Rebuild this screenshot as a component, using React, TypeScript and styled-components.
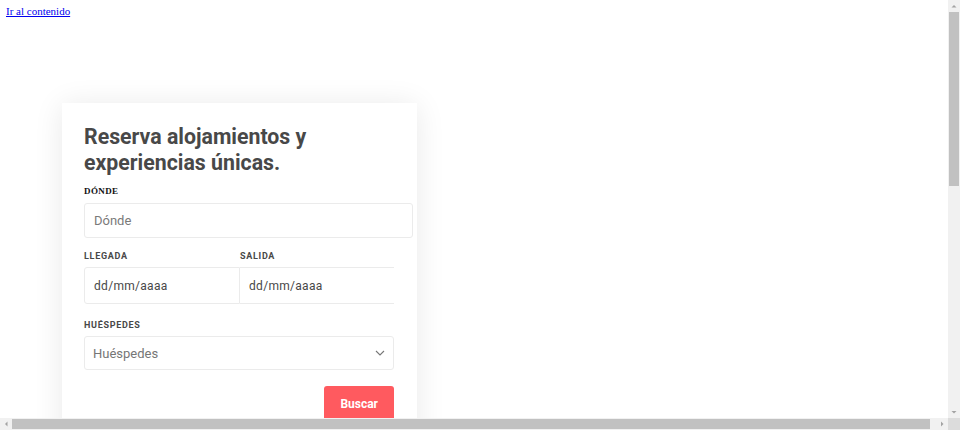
import React from "react";
import styled, { createGlobalStyle } from "styled-components";

const GlobalStyle = createGlobalStyle`
  html, body { margin: 0; padding: 0; background: #ffffff; overflow: hidden; }
  body { font-family: Roboto, "Liberation Sans", sans-serif; }
  * { box-sizing: border-box; }
`;

/* Browser frame: page area plus classic scrollbars */
const Frame = styled.div`
  display: grid;
  grid-template-columns: 948px 12px;
  grid-template-rows: 418px 12px;
  width: 960px;
  height: 430px;
  background: #ffffff;
`;

const Content = styled.div`
  overflow: hidden;
`;

const VBar = styled.div`
  display: flex;
  flex-direction: column;
  background: #f1f1f1;
`;

const HBar = styled.div`
  display: flex;
  flex-direction: row;
  background: #f1f1f1;
`;

const Corner = styled.div`
  background: #dcdcdc;
`;

const ArrowButton = styled.div`
  flex: 0 0 12px;
  width: 12px;
  height: 12px;
  display: flex;
  align-items: center;
  justify-content: center;
`;

const Track = styled.div<{ $vertical?: boolean }>`
  flex: 1;
  display: flex;
  flex-direction: ${(p) => (p.$vertical ? "column" : "row")};
  padding: ${(p) => (p.$vertical ? "0 1px" : "1px 0")};
`;

const Thumb = styled.div<{ $vertical?: boolean; $size: number }>`
  background: #c1c1c1;
  ${(p) => (p.$vertical ? `height: ${p.$size}px;` : `width: ${p.$size}px;`)}
`;

const Arrow = ({ dir }: { dir: "up" | "down" | "left" | "right" }) => {
  const pts: Record<string, string> = {
    up: "0.5,3.5 3,1 5.5,3.5",
    down: "0.5,1 3,3.5 5.5,1",
    left: "3.5,0.5 1,3 3.5,5.5",
    right: "1,0.5 3.5,3 1,5.5",
  };
  const v = dir === "up" || dir === "down";
  return (
    <svg width={v ? 6 : 4} height={v ? 4 : 6} viewBox={v ? "0 0 6 4" : "0 0 4 6"}>
      <polygon points={pts[dir]} fill="#a3a3a3" />
    </svg>
  );
};

const Page = styled.div`
  width: 948px;
  min-height: 930px;
`;

const SkipLink = styled.a`
  display: inline-block;
  margin: 5px 0 0 6px;
  font-family: "Liberation Serif", "Times New Roman", serif;
  font-size: 11px;
  line-height: 13px;
  color: #0000ee;
  text-decoration: underline;
`;

const Hero = styled.section`
  padding: 84px 0 0 62px;
`;

const Card = styled.form`
  width: 355px;
  min-height: 420px;
  padding: 21px 23px 24px 22px;
  background: #ffffff;
  box-shadow: 0 2px 28px rgba(0, 0, 0, 0.09);
  display: flex;
  flex-direction: column;
`;

const Title = styled.h1`
  margin: 0;
  font-family: Roboto, "Liberation Sans", sans-serif;
  font-size: 21.3px;
  line-height: 26px;
  font-weight: 700;
  color: #484848;
`;

const Label = styled.label<{ $serif?: boolean; $top: number; $bottom: number }>`
  display: block;
  margin: ${(p) => p.$top}px 0 ${(p) => p.$bottom}px;
  font-family: ${(p) =>
    p.$serif
      ? `"Liberation Serif", "Times New Roman", serif`
      : `Roboto, "Liberation Sans", sans-serif`};
  font-size: 9px;
  line-height: 10px;
  font-weight: 700;
  letter-spacing: ${(p) => (p.$serif ? "0.4px" : "0.7px")};
  color: ${(p) => (p.$serif ? "#111" : "#484848")};
  text-transform: uppercase;
`;

const WideInput = styled.input`
  display: block;
  width: 329px;
  height: 35px;
  padding: 0 9px;
  border: 1px solid #ebebeb;
  border-radius: 3px;
  font-family: Roboto, "Liberation Sans", sans-serif;
  font-size: 13px;
  color: #484848;
  outline: none;
  &::placeholder { color: #7a7a7a; }
`;

const DateRow = styled.div`
  display: grid;
  grid-template-columns: 156px 154px;
`;

const DateCol = styled.div`
  display: flex;
  flex-direction: column;
`;

const DateInput = styled.input<{ $first?: boolean }>`
  display: block;
  width: 100%;
  height: 37px;
  padding: 0 9px;
  border: 1px solid #ebebeb;
  border-right: ${(p) => (p.$first ? "1px solid #ebebeb" : "none")};
  border-left: ${(p) => (p.$first ? "1px solid #ebebeb" : "none")};
  border-radius: ${(p) => (p.$first ? "3px 0 0 3px" : "0")};
  font-family: Roboto, "Liberation Sans", sans-serif;
  font-size: 12px;
  letter-spacing: 0.3px;
  color: #484848;
  outline: none;
  &::placeholder { color: #484848; }
`;

const SelectBox = styled.div`
  display: flex;
  align-items: center;
  justify-content: space-between;
  width: 310px;
  height: 34px;
  padding: 0 8px 0 8px;
  border: 1px solid #ebebeb;
  border-radius: 3px;
  font-family: Roboto, "Liberation Sans", sans-serif;
  font-size: 13px;
  color: #767676;
`;

const Actions = styled.div`
  display: flex;
  justify-content: flex-end;
  width: 310px;
  margin-top: 16px;
`;

const SearchButton = styled.button`
  height: 36px;
  padding: 0 16px;
  border: none;
  border-radius: 3px;
  background: #ff5a5f;
  color: #ffffff;
  font-family: Roboto, "Liberation Sans", sans-serif;
  font-size: 12px;
  font-weight: 700;
  cursor: pointer;
`;

const Chevron = () => (
  <svg width="10" height="6" viewBox="0 0 10 6" fill="none">
    <path d="M1 1l4 4 4-4" stroke="#777" strokeWidth="1.1" />
  </svg>
);

export default function App() {
  return (
    <>
      <GlobalStyle />
      <Frame>
        <Content>
          <Page>
            <SkipLink href="#main">Ir al contenido</SkipLink>
            <Hero id="main">
              <Card onSubmit={(e) => e.preventDefault()}>
                <Title>Reserva alojamientos y experiencias únicas.</Title>
                <Label $serif $top={10} $bottom={7}>Dónde</Label>
                <WideInput placeholder="Dónde" />
                <DateRow>
                  <DateCol>
                    <Label $top={13} $bottom={6}>Llegada</Label>
                    <DateInput $first placeholder="dd/mm/aaaa" />
                  </DateCol>
                  <DateCol>
                    <Label $top={13} $bottom={6}>Salida</Label>
                    <DateInput placeholder="dd/mm/aaaa" />
                  </DateCol>
                </DateRow>
                <Label $top={16} $bottom={6}>Huéspedes</Label>
                <SelectBox>
                  <span>Huéspedes</span>
                  <Chevron />
                </SelectBox>
                <Actions>
                  <SearchButton type="submit">Buscar</SearchButton>
                </Actions>
              </Card>
            </Hero>
          </Page>
        </Content>
        <VBar>
          <ArrowButton><Arrow dir="up" /></ArrowButton>
          <Track $vertical>
            <Thumb $vertical $size={174} />
          </Track>
          <ArrowButton><Arrow dir="down" /></ArrowButton>
        </VBar>
        <HBar>
          <ArrowButton><Arrow dir="left" /></ArrowButton>
          <Track>
            <Thumb $size={918} />
          </Track>
          <ArrowButton><Arrow dir="right" /></ArrowButton>
        </HBar>
        <Corner />
      </Frame>
    </>
  );
}
